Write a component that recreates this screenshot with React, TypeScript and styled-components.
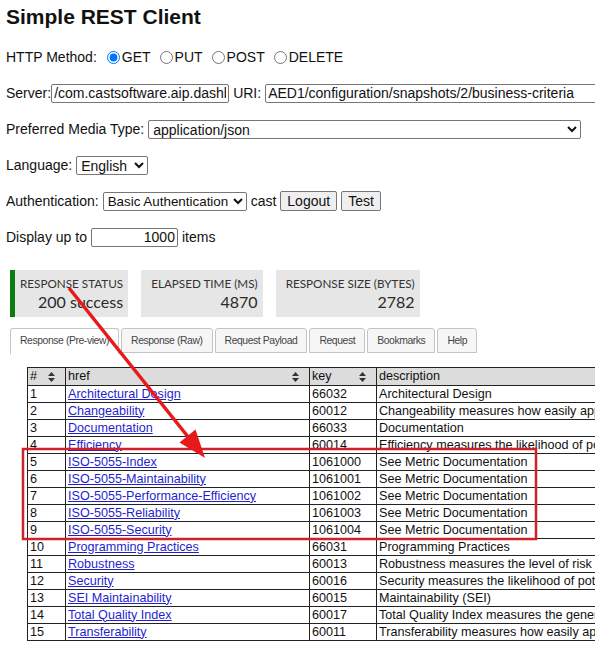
import React from 'react'
import styled, { createGlobalStyle } from 'styled-components'

const Global = createGlobalStyle`
  html, body {
    margin: 0;
    padding: 0;
    background: #fff;
    overflow: hidden;
  }
  body {
    font-family: "Liberation Sans", Arial, sans-serif;
    color: #111;
  }
`

const rows = [
  { key: '66032', href: 'Architectural Design', desc: 'Architectural Design' },
  { key: '60012', href: 'Changeability', desc: 'Changeability measures how easily applications can be modified' },
  { key: '66033', href: 'Documentation', desc: 'Documentation' },
  { key: '60014', href: 'Efficiency', desc: 'Efficiency measures the likelihood of potential performance bottlenecks' },
  { key: '1061000', href: 'ISO-5055-Index', desc: 'See Metric Documentation' },
  { key: '1061001', href: 'ISO-5055-Maintainability', desc: 'See Metric Documentation' },
  { key: '1061002', href: 'ISO-5055-Performance-Efficiency', desc: 'See Metric Documentation' },
  { key: '1061003', href: 'ISO-5055-Reliability', desc: 'See Metric Documentation' },
  { key: '1061004', href: 'ISO-5055-Security', desc: 'See Metric Documentation' },
  { key: '66031', href: 'Programming Practices', desc: 'Programming Practices' },
  { key: '60013', href: 'Robustness', desc: 'Robustness measures the level of risk and the likelihood of failures' },
  { key: '60016', href: 'Security', desc: 'Security measures the likelihood of potential security breaches' },
  { key: '60015', href: 'SEI Maintainability', desc: 'Maintainability (SEI)' },
  { key: '60017', href: 'Total Quality Index', desc: 'Total Quality Index measures the general maintainability level' },
  { key: '60011', href: 'Transferability', desc: 'Transferability measures how easily applications can be moved' },
]

const tabs = ['Response (Pre-view)', 'Response (Raw)', 'Request Payload', 'Request', 'Bookmarks', 'Help']

const SortIcon = () => (
  <svg width="7" height="10" viewBox="0 0 7 10">
    <path d="M3.5 0 L7 4 L0 4 Z M0 6 L7 6 L3.5 10 Z" fill="#333" />
  </svg>
)

const App = () => {
  return (
    <Page>
      <Global />
      <Title>Simple REST Client</Title>

      <Form>
        <Row>
          <Label $space={6}>HTTP Method:</Label>
          <Radio><input type="radio" name="m" defaultChecked />GET</Radio>
          <Radio><input type="radio" name="m" />PUT</Radio>
          <Radio><input type="radio" name="m" />POST</Radio>
          <Radio><input type="radio" name="m" />DELETE</Radio>
        </Row>
        <Row>
          <Label $space={-4}>Server:</Label>
          <TextInput $w={178} defaultValue="/com.castsoftware.aip.dashboard" />
          <Label>URI:</Label>
          <TextInput $w={400} defaultValue="AED1/configuration/snapshots/2/business-criteria" />
        </Row>
        <Row>
          <Label>Preferred Media Type:</Label>
          <Select $w={433} defaultValue="json">
            <option value="json">application/json</option>
          </Select>
        </Row>
        <Row>
          <Label>Language:</Label>
          <Select $w={72} defaultValue="en">
            <option value="en">English</option>
          </Select>
        </Row>
        <Row>
          <Label>Authentication:</Label>
          <Select $w={144} $small defaultValue="basic">
            <option value="basic">Basic Authentication</option>
          </Select>
          <Label>cast</Label>
          <Button>Logout</Button>
          <Button>Test</Button>
        </Row>
        <Row>
          <Label>Display up to</Label>
          <TextInput $w={87} $right defaultValue="1000" />
          <Label>items</Label>
        </Row>
      </Form>

      <Stats>
        <StatBox $ok>
          <StatLabel>RESPONSE STATUS</StatLabel>
          <StatValue>200 success</StatValue>
        </StatBox>
        <StatBox>
          <StatLabel>ELAPSED TIME (MS)</StatLabel>
          <StatValue>4870</StatValue>
        </StatBox>
        <StatBox>
          <StatLabel>RESPONSE SIZE (BYTES)</StatLabel>
          <StatValue>2782</StatValue>
        </StatBox>
      </Stats>

      <Tabs>
        {tabs.map((t, i) => (
          <Tab key={t} $active={i === 0}>{t}</Tab>
        ))}
      </Tabs>

      <Table>
        <colgroup>
          <col style={{ width: 38 }} />
          <col style={{ width: 244 }} />
          <col style={{ width: 67 }} />
          <col style={{ width: 420 }} />
        </colgroup>
        <thead>
          <tr>
            <Th><HeadInner>#<SortIcon /></HeadInner></Th>
            <Th><HeadInner>href<SortIcon /></HeadInner></Th>
            <Th><HeadInner>key<SortIcon /></HeadInner></Th>
            <Th><HeadInner>description</HeadInner></Th>
          </tr>
        </thead>
        <tbody>
          {rows.map((r, i) => (
            <tr key={r.key}>
              <Td>{i + 1}</Td>
              <Td><Link href="#">{r.href}</Link></Td>
              <Td>{r.key}</Td>
              <Td>{r.desc}</Td>
            </tr>
          ))}
        </tbody>
      </Table>

      <Annotation width="595" height="654" viewBox="0 0 595 654">
        <rect x="23" y="449" width="513" height="90" fill="none" stroke="#d0202a" strokeWidth="2.5" />
        <line x1="69" y1="288" x2="189" y2="438" stroke="#e8191b" strokeWidth="3.5" />
        <polygon points="205,458 179.5,442.5 195.5,429.5" fill="#e8191b" />
      </Annotation>
    </Page>
  )
}

export default App

const Page = styled.div`
  position: relative;
  width: 595px;
  height: 654px;
  padding-left: 6px;
  box-sizing: border-box;
  overflow: hidden;
`

const Title = styled.h1`
  margin: 5px 0 0;
  height: 24px;
  line-height: 24px;
  font-size: 21px;
  font-weight: bold;
  color: #111;
  white-space: nowrap;
`

const Form = styled.div`
  display: flex;
  flex-direction: column;
  gap: 14px;
  margin-top: 17px;
`

const Row = styled.div`
  display: flex;
  align-items: center;
  gap: 4px;
  height: 22px;
  font-size: 14px;
  white-space: nowrap;
`

const Label = styled.span<{ $space?: number }>`
  margin-right: ${(p) => p.$space ?? 0}px;
`

const Radio = styled.label`
  display: inline-flex;
  align-items: center;
  margin-right: 5px;
  input {
    margin: 0 2px 0 0;
    width: 13px;
    height: 13px;
  }
`

const TextInput = styled.input<{ $w: number; $right?: boolean }>`
  flex: none;
  width: ${(p) => p.$w}px;
  height: 19px;
  box-sizing: border-box;
  border: 1px solid #767676;
  border-radius: 2px;
  padding: 0 2px;
  font: 14px "Liberation Sans", Arial, sans-serif;
  color: #111;
  text-align: ${(p) => (p.$right ? 'right' : 'left')};
`

const Select = styled.select<{ $w: number; $small?: boolean }>`
  flex: none;
  width: ${(p) => p.$w}px;
  height: 19px;
  box-sizing: border-box;
  font: ${(p) => (p.$small ? 13.4 : 14)}px "Liberation Sans", Arial, sans-serif;
  color: #111;
  border: 1px solid #767676;
  border-radius: 2px;
  background: #fff;
  padding: 0;
`

const Button = styled.button`
  height: 20px;
  padding: 0 6px;
  font: 14px "Liberation Sans", Arial, sans-serif;
  color: #111;
  background: #efefef;
  border: 1px solid #767676;
  border-radius: 2px;
`

const Stats = styled.div`
  display: flex;
  gap: 13px;
  margin: 22px 0 0 4px;
`

const StatBox = styled.div<{ $ok?: boolean }>`
  background: #e6e6e6;
  border-left: 5px solid ${(p) => (p.$ok ? '#0a7d12' : '#e6e6e6')};
  padding: 5px 5px 4px 5px;
  height: 47px;
  box-sizing: border-box;
  display: flex;
  flex-direction: column;
  align-items: flex-end;
  font-family: Lato, "Open Sans", sans-serif;
  font-weight: 400;
  white-space: nowrap;
`

const StatLabel = styled.div`
  font-size: 11.7px;
  line-height: 16px;
  color: #333;
`

const StatValue = styled.div`
  font-size: 16px;
  line-height: 21px;
  color: #2a2a2a;
`

const Tabs = styled.div`
  display: flex;
  gap: 2px;
  align-items: flex-start;
  margin: 11px 0 0 4px;
  height: 26px;
`

const Tab = styled.div<{ $active?: boolean }>`
  height: ${(p) => (p.$active ? 26 : 25)}px;
  box-sizing: border-box;
  padding: 0 9px;
  font: 10.4px "Liberation Sans", Arial, sans-serif;
  letter-spacing: -0.42px;
  line-height: 24px;
  color: #454545;
  background: ${(p) => (p.$active ? '#fff' : '#f6f6f6')};
  border: 1px solid #c5c5c5;
  border-bottom: ${(p) => (p.$active ? 'none' : '1px solid #c5c5c5')};
  border-radius: 3px 3px 0 0;
  white-space: nowrap;
`

const Table = styled.table`
  table-layout: fixed;
  width: 769px;
  border-collapse: collapse;
  margin: 13px 0 0 21px;
  font: 12.6px "Liberation Sans", Arial, sans-serif;
  color: #111;
  white-space: nowrap;
`

const Th = styled.th`
  background: #dcdcdc;
  border: 1px solid #222;
  padding: 0 2px;
  height: 17px;
  line-height: 15px;
  font-weight: normal;
  text-align: left;
  overflow: hidden;
`

const HeadInner = styled.div`
  display: flex;
  align-items: center;
  justify-content: space-between;
  gap: 8px;
  padding-right: 8px;
`

const Td = styled.td`
  border: 1px solid #222;
  padding: 0 2px;
  height: 17px;
  line-height: 15px;
  box-sizing: border-box;
  overflow: hidden;
`

const Link = styled.a`
  color: #1f1fcf;
  text-decoration: underline;
`

const Annotation = styled.svg`
  position: absolute;
  left: 0;
  top: 0;
  pointer-events: none;
`
